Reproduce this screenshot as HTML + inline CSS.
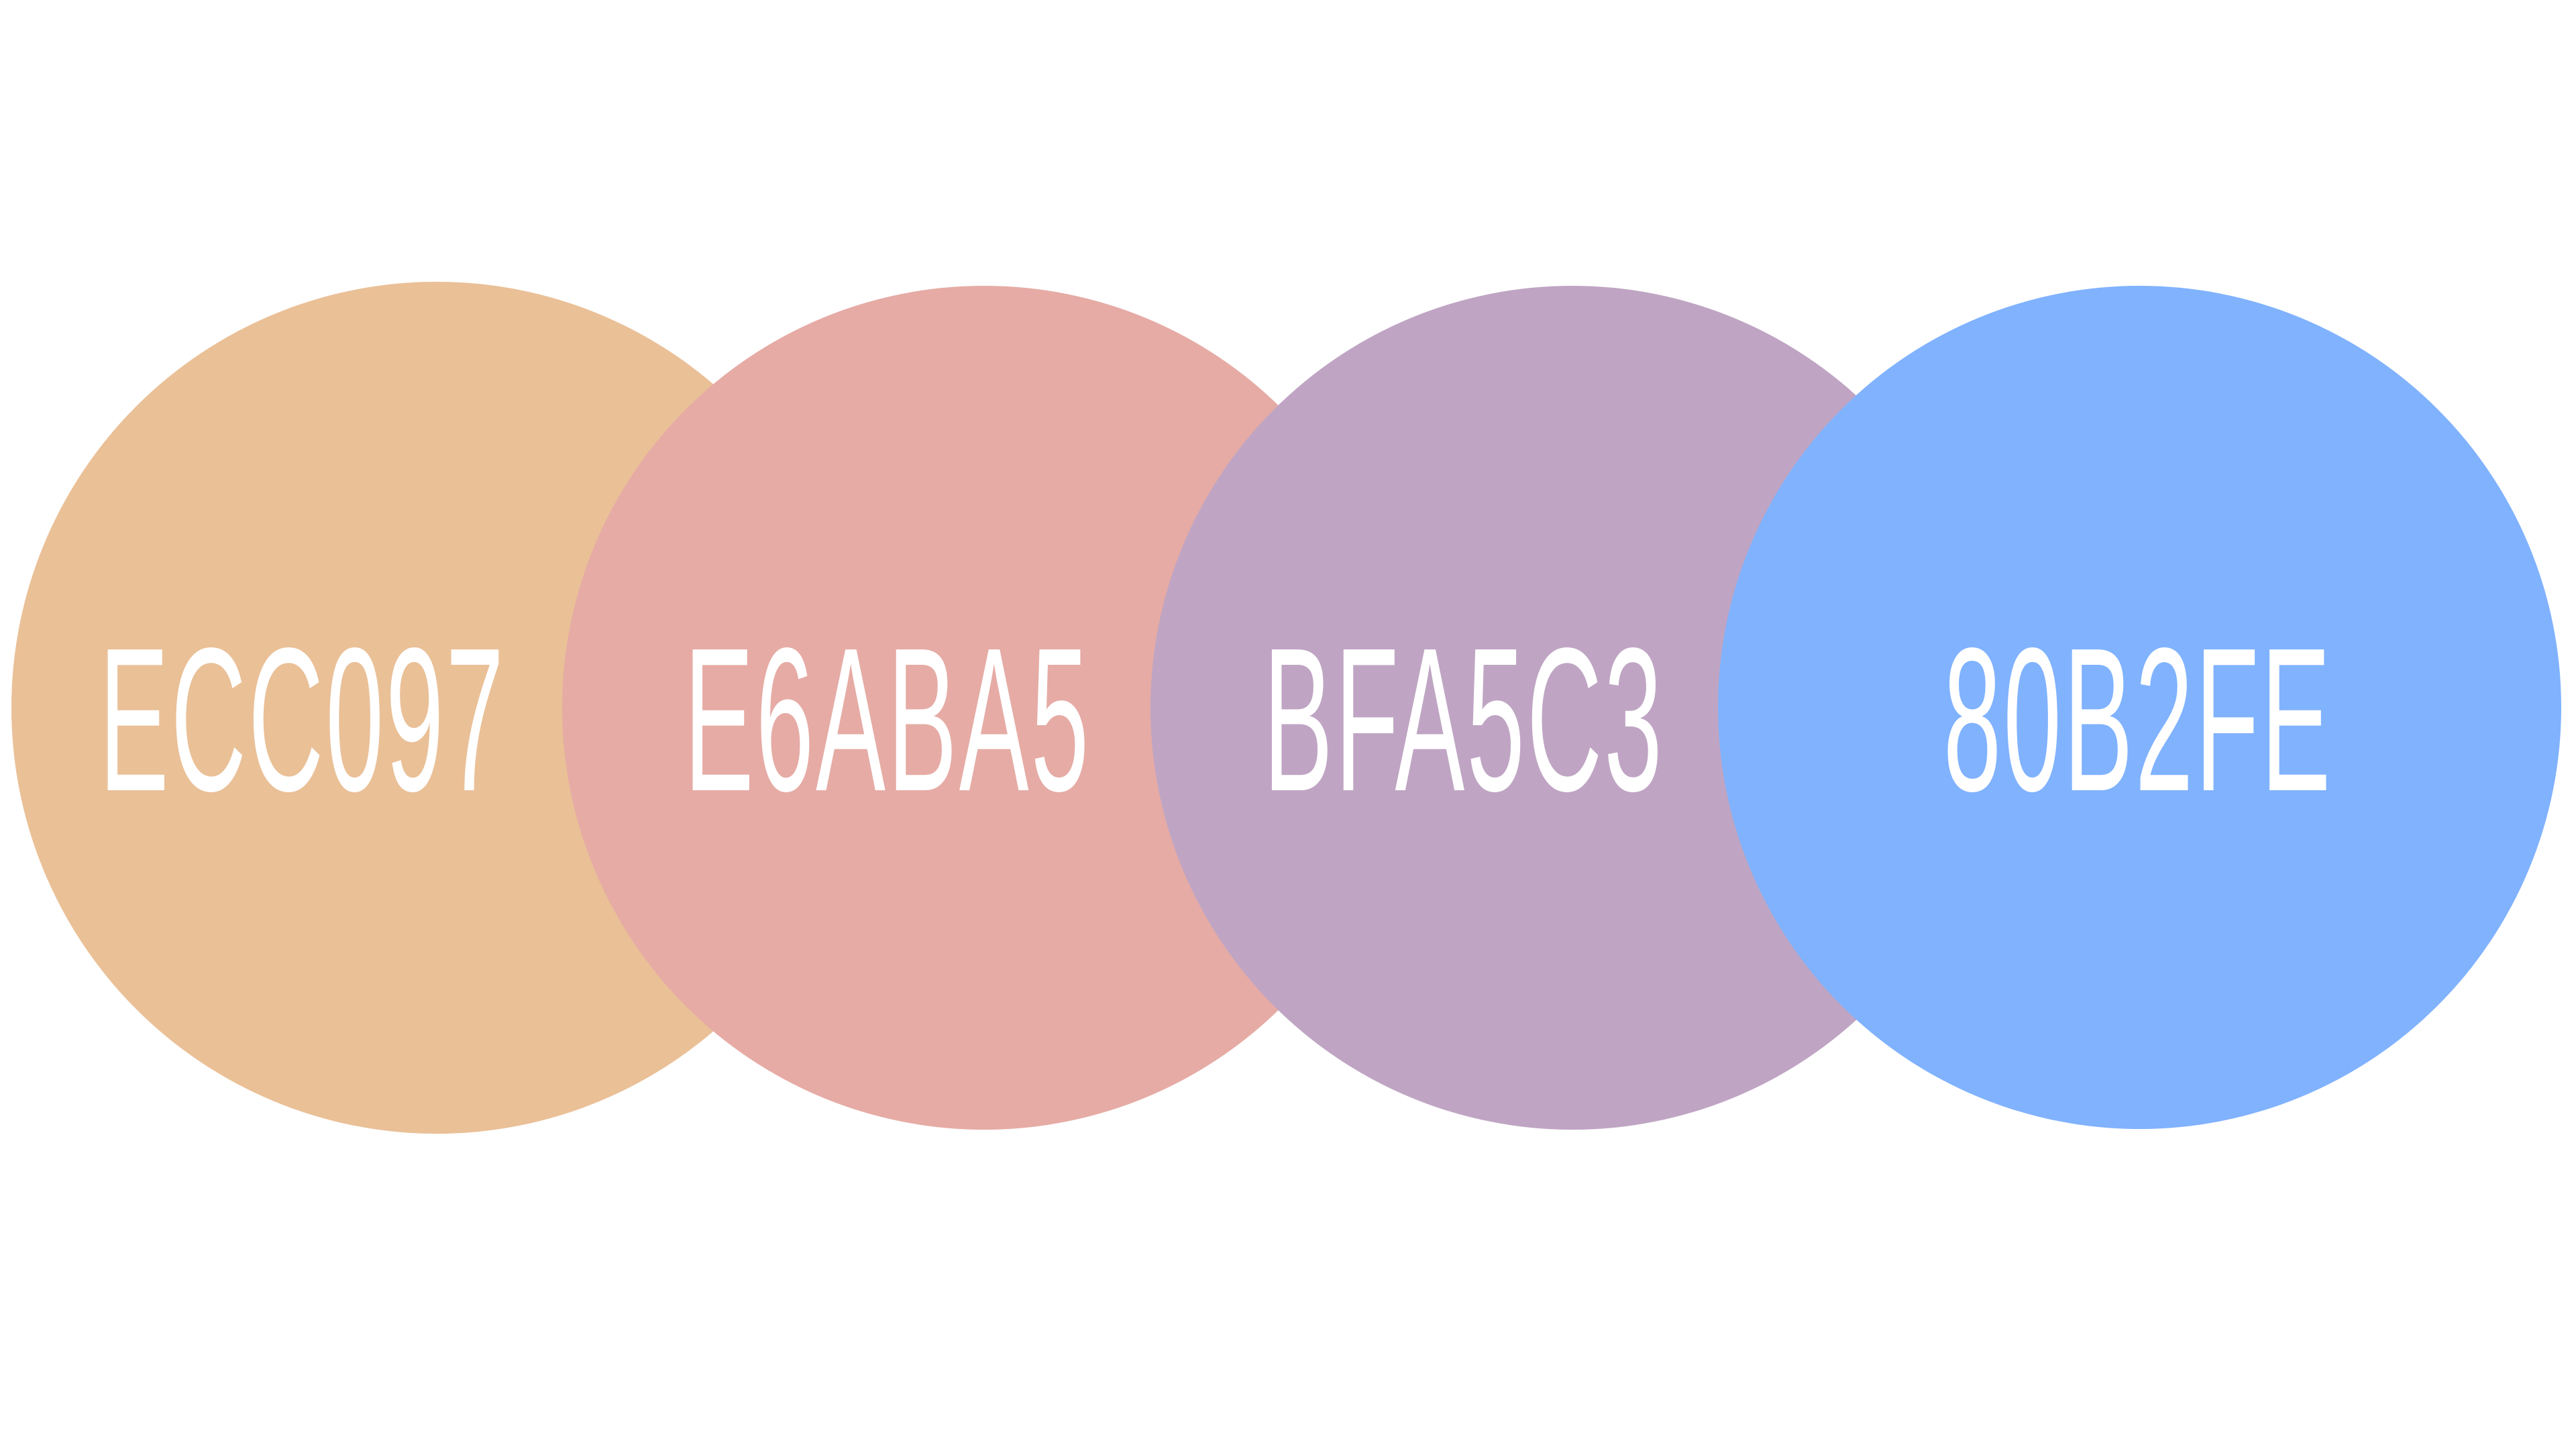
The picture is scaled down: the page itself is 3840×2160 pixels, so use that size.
<!DOCTYPE html>
<html><head><meta charset="utf-8"><style>
html,body{margin:0;padding:0;background:#fff;width:3840px;height:2160px;overflow:hidden;position:relative}
.c{position:absolute;border-radius:50%}
.t{position:absolute;top:1070px;width:2000px;margin-left:-1000px;text-align:center;color:#fff;
font-family:"Liberation Sans Narrow","Liberation Sans",sans-serif;font-size:305px;line-height:305px;margin-top:-150px;
transform:scaleX(0.51);letter-spacing:6px;white-space:nowrap}
</style></head><body>
<div class="c" style="left:17px;top:420px;width:1268px;height:1270px;background:#EAC097"></div>
<div class="c" style="left:838px;top:426px;width:1258px;height:1258px;background:#E6ABA5"></div>
<div class="c" style="left:1715px;top:426px;width:1258px;height:1258px;background:#BFA5C3"></div>
<div class="c" style="left:2561px;top:426px;width:1257px;height:1257px;background:#80B2FE"></div>
<div class="t" style="left:451px">ECC097</div>
<div class="t" style="left:1323px">E6ABA5</div>
<div class="t" style="left:2182px">BFA5C3</div>
<div class="t" style="left:3187px">80B2FE</div>
</body></html>
